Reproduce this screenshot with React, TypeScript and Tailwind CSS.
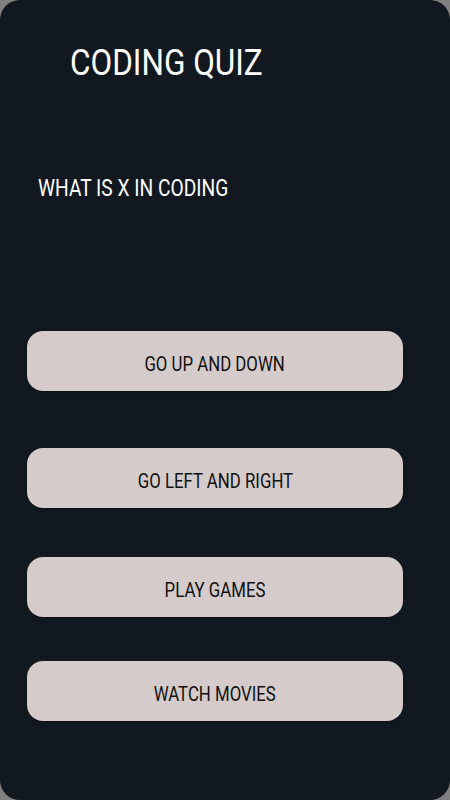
import React from "react";

const answers = [
  { label: "GO UP AND DOWN", mt: "mt-[129px]" },
  { label: "GO LEFT AND RIGHT", mt: "mt-[57px]" },
  { label: "PLAY GAMES", mt: "mt-[49px]" },
  { label: "WATCH MOVIES", mt: "mt-[44px]" },
];

export default function App() {
  return (
    <div className="w-[450px] h-[800px] bg-[#808080]">
      <div
        className="w-full h-full rounded-[20px] bg-[#111820] flex flex-col"
        style={{ fontFamily: "Roboto, 'Noto Sans', sans-serif" }}
      >
        <div className="pt-[43px] pl-[70px] text-[36px] leading-[40px] text-white">
          <span className="inline-block origin-left scale-x-[0.875] whitespace-nowrap">CODING QUIZ</span>
        </div>
        <div className="mt-[91px] pl-[38px] text-[24px] leading-[28px] text-white">
          <span className="inline-block origin-left scale-x-[0.8] whitespace-nowrap">WHAT IS X IN CODING</span>
        </div>
        <div className="flex flex-col pl-[27px]">
          {answers.map((a) => (
            <button
              key={a.label}
              className={`${a.mt} w-[376px] h-[60px] rounded-[16px] bg-[#d4cbca] text-[#111111] text-[20px] leading-[24px] flex items-center justify-center pt-[6px] shadow-[0_1px_2px_rgba(0,0,0,0.4)]`}
            >
              <span className="inline-block origin-center scale-x-[0.84] whitespace-nowrap">{a.label}</span>
            </button>
          ))}
        </div>
      </div>
    </div>
  );
}
